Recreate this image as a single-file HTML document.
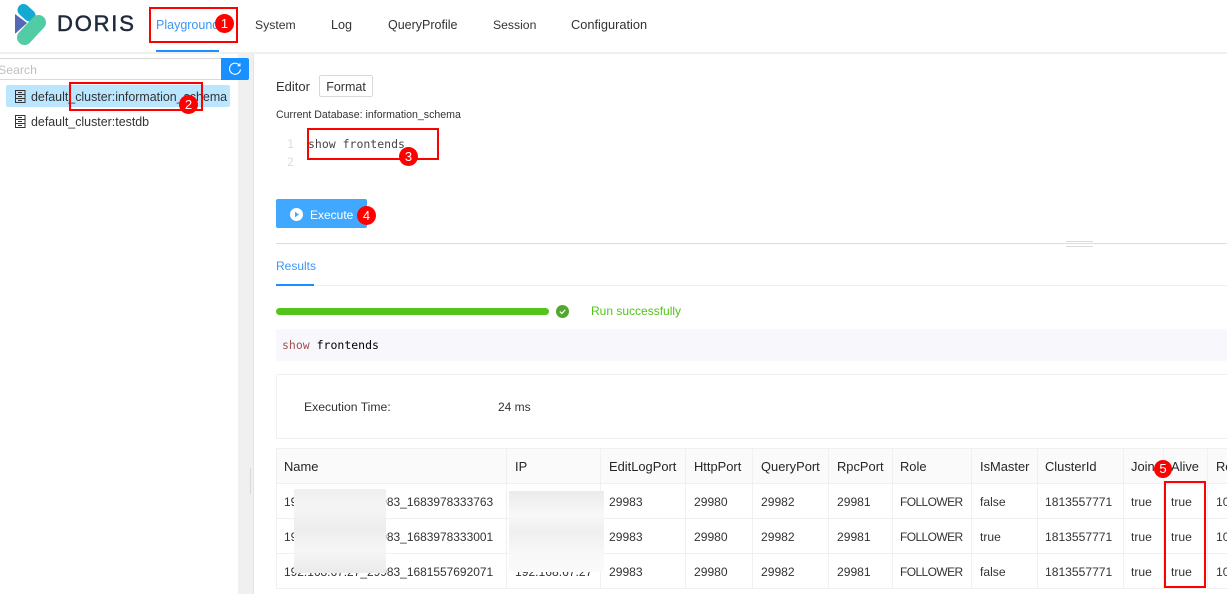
<!DOCTYPE html>
<html><head><meta charset="utf-8"><style>
html,body{margin:0;padding:0;background:#fff}
#p{position:relative;width:1227px;height:594px;overflow:hidden;background:#fff;font-family:"Liberation Sans","Noto Sans CJK SC",sans-serif;font-size:12.1px;color:#333}
#p div{position:absolute;white-space:nowrap}
.t{line-height:18px;height:18px}
.h{color:#262626;font-weight:400;font-size:12.9px}
.m{font-family:"DejaVu Sans Mono","Liberation Mono",monospace;font-size:11.5px;line-height:16px}
.box{border:2px solid #f00;box-sizing:border-box}
.b{width:19px;height:19px;border-radius:50%;background:#f00;color:#fff;font-size:13px;text-align:center;line-height:19px}
.g{background:#f0f0f0}
.f{font-size:12px;letter-spacing:-.6px}
</style></head><body><div id="p">
<!-- header -->
<div style="left:0;top:52px;width:1227px;height:2px;background:#f0f0f0"></div>
<svg style="position:absolute;left:14px;top:3px" width="34" height="43" viewBox="0 0 34 43">
<path d="M1 11 L1 30 Q1 31 2 30 L13 20 Z" fill="#5468b5"/>
<path d="M9.5 7 L15.5 12.5" fill="none" stroke="#14a9d0" stroke-width="12" stroke-linecap="round"/>
<path d="M10.5 34.5 L24.5 19.5" fill="none" stroke="#52cca4" stroke-width="15" stroke-linecap="round"/>
</svg>
<div style="left:57px;top:9px;font-size:22px;line-height:30px;font-weight:400;color:#1f2a3c;letter-spacing:1.8px;-webkit-text-stroke:.5px #1f2a3c">DORIS</div>
<div class="t" style="left:156px;top:16px;color:#3d96f5;font-size:12.5px">Playground</div>
<div style="left:156px;top:50px;width:63px;height:2px;background:#1890ff"></div>
<div class="t" style="left:255px;top:16px;font-size:12.2px">System</div>
<div class="t" style="left:331px;top:16px;font-size:12.6px">Log</div>
<div class="t" style="left:388px;top:16px;font-size:12.5px">QueryProfile</div>
<div class="t" style="left:493px;top:16px;font-size:12.2px">Session</div>
<div class="t" style="left:571px;top:16px;font-size:12.8px">Configuration</div>
<!-- sidebar -->
<div style="left:238px;top:54px;width:15px;height:540px;background:#f0f0f0"></div>
<div style="left:253px;top:54px;width:1px;height:540px;background:#e4e4e4"></div>
<div style="left:250px;top:468px;width:1px;height:26px;background:#d8d8d8"></div>
<div style="left:-2px;top:58px;width:224px;height:22px;box-sizing:border-box;border:1px solid #d9d9d9;background:#fff"></div>
<div class="t" style="left:-2px;top:61px;color:#bfbfbf;font-size:12.3px">Search</div>
<div style="left:221px;top:58px;width:28px;height:22px;background:#1890ff;border-radius:0 2px 2px 0"></div>
<svg style="position:absolute;left:228px;top:62px" width="14" height="14" viewBox="0 0 14 14"><path d="M11.5 3.5 A5.5 5.5 0 1 0 12.5 7.5" fill="none" stroke="#fff" stroke-width="1.1"/><path d="M9.5 3.8 L12 3.8 L12 1.2" fill="none" stroke="#fff" stroke-width="1"/></svg>
<div style="left:6px;top:85px;width:224px;height:22px;background:#bae7ff;border-radius:2px"></div>
<svg style="position:absolute;left:15px;top:90px" width="11" height="13" viewBox="0 0 11 13"><path d="M.5.5H10V12.5H.5ZM.5 4.5H10M.5 8.5H10M3 2.5H7M3 6.5H7M3 10.5H7" fill="none" stroke="#333" stroke-width="1"/></svg>
<svg style="position:absolute;left:15px;top:115px" width="11" height="13" viewBox="0 0 11 13"><path d="M.5.5H10V12.5H.5ZM.5 4.5H10M.5 8.5H10M3 2.5H7M3 6.5H7M3 10.5H7" fill="none" stroke="#333" stroke-width="1"/></svg>
<div class="t" style="left:31px;top:88px;font-size:12.43px">default_cluster:information_schema</div>
<div class="t" style="left:31px;top:113px;font-size:12.43px">default_cluster:testdb</div>
<!-- editor -->
<div class="t" style="left:276px;top:78px;font-size:13px">Editor</div>
<div style="left:319px;top:75px;width:54px;height:22px;box-sizing:border-box;border:1px solid #d9d9d9;border-radius:2px;text-align:center;line-height:22px;font-size:12.5px">Format</div>
<div class="t" style="left:276px;top:106px;font-size:10.6px">Current Database: information_schema</div>
<div class="m" style="left:287px;top:136px;color:#ddd">1</div>
<div class="m" style="left:287px;top:154px;color:#ddd">2</div>
<div class="m" style="left:308px;top:136px;color:#444">show frontends</div>
<div style="left:276px;top:199px;width:91px;height:29px;background:#40a9ff;border-radius:2px"></div>
<svg style="position:absolute;left:290px;top:208px" width="13" height="13" viewBox="0 0 13 13"><circle cx="6.5" cy="6.5" r="6.5" fill="#fff"/><path d="M5 3.8 L9 6.5 L5 9.2 Z" fill="#40a9ff"/></svg>
<div class="t" style="left:310px;top:206px;color:#fff;font-size:12px">Execute</div>
<!-- divider -->
<div style="left:276px;top:243px;width:951px;height:1px;background:#dcdcdc"></div>
<div style="left:1066px;top:241px;width:27px;height:1px;background:#dcdcdc"></div>
<div style="left:1066px;top:246px;width:27px;height:1px;background:#dcdcdc"></div>
<div class="t" style="left:276px;top:257px;color:#3d96f5;font-size:12px">Results</div>
<div style="left:276px;top:285px;width:951px;height:1px;background:#f0f0f0"></div>
<div style="left:276px;top:284px;width:38px;height:2px;background:#1890ff"></div>
<div style="left:276px;top:308px;width:273px;height:7px;border-radius:4px;background:#52c41a"></div>
<svg style="position:absolute;left:556px;top:305px" width="13" height="13" viewBox="0 0 13 13"><circle cx="6.5" cy="6.5" r="6.5" fill="#52a82a"/><path d="M3.8 6.6 L5.8 8.5 L9.2 4.8" fill="none" stroke="#fff" stroke-width="1.2"/></svg>
<div class="t" style="left:591px;top:302px;color:#52c41a;font-size:12px">Run successfully</div>
<div style="left:276px;top:329px;width:951px;height:32px;background:#f8f8fc"></div>
<div class="m" style="left:282px;top:337px;color:#000"><span style="color:#a05050">show</span> frontends</div>
<!-- stats -->
<div style="left:276px;top:374px;width:960px;height:65px;box-sizing:border-box;border:1px solid #f0f0f0;border-radius:2px"></div>
<div class="t" style="left:304px;top:398px;font-size:12.2px">Execution Time:</div>
<div class="t" style="left:498px;top:398px;font-size:12px">24 ms</div>
<!-- table -->
<div style="left:276px;top:448px;width:951px;height:35px;background:#fafafa"></div>
<div class="g" style="left:276px;top:448px;width:951px;height:1px"></div>
<div class="g" style="left:276px;top:483px;width:951px;height:1px"></div>
<div class="g" style="left:276px;top:518px;width:951px;height:1px"></div>
<div class="g" style="left:276px;top:553px;width:951px;height:1px"></div>
<div class="g" style="left:276px;top:588px;width:951px;height:1px"></div>
<div class="g" style="left:276px;top:448px;width:1px;height:141px"></div>
<div class="g" style="left:506px;top:448px;width:1px;height:141px"></div>
<div class="g" style="left:600px;top:448px;width:1px;height:141px"></div>
<div class="g" style="left:685px;top:448px;width:1px;height:141px"></div>
<div class="g" style="left:752px;top:448px;width:1px;height:141px"></div>
<div class="g" style="left:828px;top:448px;width:1px;height:141px"></div>
<div class="g" style="left:892px;top:448px;width:1px;height:141px"></div>
<div class="g" style="left:971px;top:448px;width:1px;height:141px"></div>
<div class="g" style="left:1037px;top:448px;width:1px;height:141px"></div>
<div class="g" style="left:1123px;top:448px;width:1px;height:141px"></div>
<div class="g" style="left:1163px;top:448px;width:1px;height:141px"></div>
<div class="g" style="left:1207px;top:448px;width:1px;height:141px"></div>
<div class="t h" style="left:284px;top:458px">Name</div><div class="t h" style="left:515px;top:458px">IP</div><div class="t h" style="left:609px;top:458px">EditLogPort</div><div class="t h" style="left:694px;top:458px">HttpPort</div><div class="t h" style="left:761px;top:458px">QueryPort</div><div class="t h" style="left:837px;top:458px">RpcPort</div><div class="t h" style="left:900px;top:458px">Role</div><div class="t h" style="left:980px;top:458px">IsMaster</div><div class="t h" style="left:1045px;top:458px">ClusterId</div><div class="t h" style="left:1131px;top:458px">Join</div><div class="t h" style="left:1171px;top:458px">Alive</div><div class="t h" style="left:1216px;top:458px">Re</div>

<div class="t" style="left:284px;top:493px;font-size:11.95px">192.168.67.25_29983_1683978333763</div><div class="t" style="left:609px;top:493px">29983</div><div class="t" style="left:694px;top:493px">29980</div><div class="t" style="left:761px;top:493px">29982</div><div class="t" style="left:837px;top:493px">29981</div><div class="t f" style="left:900px;top:493px">FOLLOWER</div><div class="t" style="left:980px;top:493px">false</div><div class="t" style="left:1045px;top:493px">1813557771</div><div class="t" style="left:1131px;top:493px">true</div><div class="t" style="left:1171px;top:493px">true</div><div class="t" style="left:1216px;top:493px">10</div>
<div class="t" style="left:284px;top:528px;font-size:11.95px">192.168.67.26_29983_1683978333001</div><div class="t" style="left:609px;top:528px">29983</div><div class="t" style="left:694px;top:528px">29980</div><div class="t" style="left:761px;top:528px">29982</div><div class="t" style="left:837px;top:528px">29981</div><div class="t f" style="left:900px;top:528px">FOLLOWER</div><div class="t" style="left:980px;top:528px">true</div><div class="t" style="left:1045px;top:528px">1813557771</div><div class="t" style="left:1131px;top:528px">true</div><div class="t" style="left:1171px;top:528px">true</div><div class="t" style="left:1216px;top:528px">10</div>
<div class="t" style="left:284px;top:563px;font-size:11.95px">192.168.67.27_29983_1681557692071</div><div class="t" style="left:515px;top:563px">192.168.67.27</div><div class="t" style="left:609px;top:563px">29983</div><div class="t" style="left:694px;top:563px">29980</div><div class="t" style="left:761px;top:563px">29982</div><div class="t" style="left:837px;top:563px">29981</div><div class="t f" style="left:900px;top:563px">FOLLOWER</div><div class="t" style="left:980px;top:563px">false</div><div class="t" style="left:1045px;top:563px">1813557771</div><div class="t" style="left:1131px;top:563px">true</div><div class="t" style="left:1171px;top:563px">true</div><div class="t" style="left:1216px;top:563px">10</div>
<!-- blurs -->
<div style="left:294px;top:489px;width:92px;height:84px;background:linear-gradient(180deg,#efefef 0%,#f5f5f5 22%,#ededed 48%,#f6f6f6 72%,#ebebeb 100%)"></div>
<div style="left:509px;top:491px;width:95px;height:81px;background:linear-gradient(180deg,#ebebeb 0%,#f8f8f8 30%,#efefef 50%,#f8f8f8 78%,#fafafa 100%)"></div>
<!-- annotations -->
<div class="box" style="left:149px;top:7px;width:89px;height:36px"></div>
<div class="b" style="left:215px;top:14px">1</div>
<div class="box" style="left:69px;top:82px;width:134px;height:29px"></div>
<div class="b" style="left:179px;top:95px">2</div>
<div class="box" style="left:307px;top:128px;width:132px;height:32px"></div>
<div class="b" style="left:399px;top:147px">3</div>
<div class="b" style="left:357px;top:206px">4</div>
<div class="box" style="left:1164px;top:481px;width:42px;height:107px"></div>
<div class="b" style="left:1154px;top:460px;width:18px;height:18px;line-height:18px">5</div>
</div></body></html>
